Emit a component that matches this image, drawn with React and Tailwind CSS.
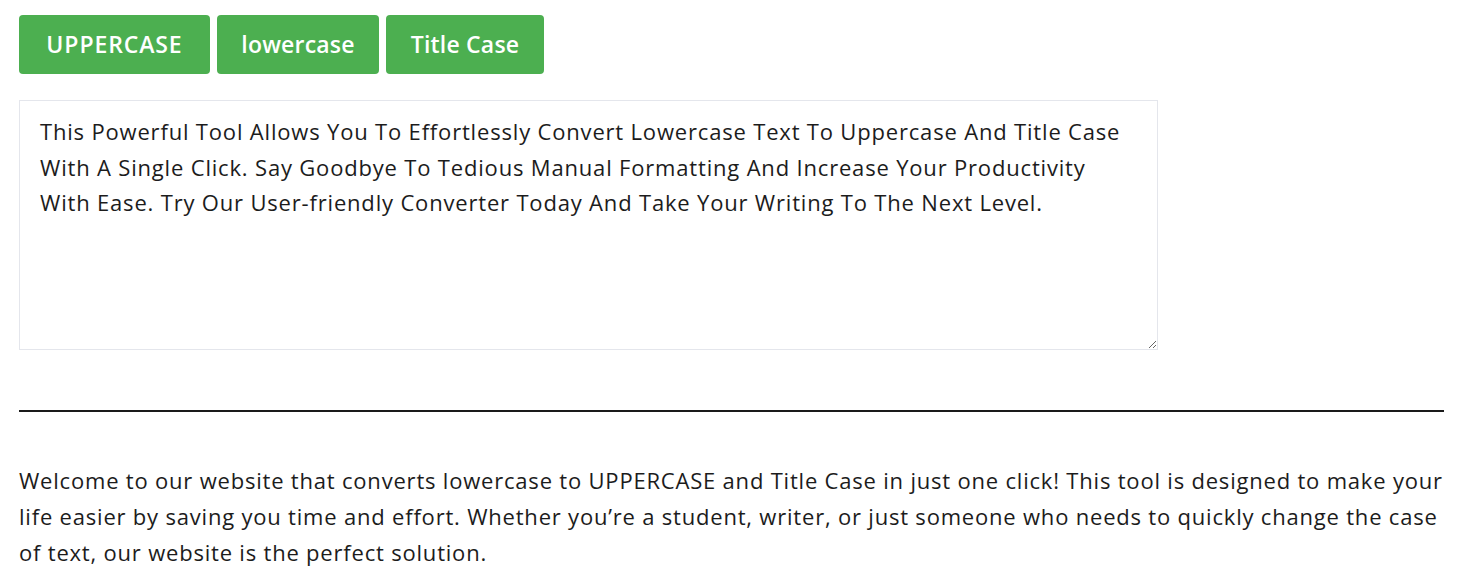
import React from "react";

export default function App() {
  const text =
    "This Powerful Tool Allows You To Effortlessly Convert Lowercase Text To Uppercase And Title Case With A Single Click. Say Goodbye To Tedious Manual Formatting And Increase Your Productivity With Ease. Try Our User-friendly Converter Today And Take Your Writing To The Next Level.";
  return (
    <div className="bg-white min-h-[587px] px-[19px] pt-[15px] text-[#1c1c1c] font-['Open_Sans',sans-serif]">
      <div className="flex gap-[7px]">
        <button className="h-[59px] w-[191px] rounded-[4px] bg-[#4caf50] text-white text-[23px] font-semibold tracking-[0.9px]">UPPERCASE</button>
        <button className="h-[59px] w-[162px] rounded-[4px] bg-[#4caf50] text-white text-[23px] font-semibold tracking-[0.2px]">lowercase</button>
        <button className="h-[59px] w-[158px] rounded-[4px] bg-[#4caf50] text-white text-[23px] font-semibold tracking-[0.2px]">Title Case</button>
      </div>
      <textarea
        className="block mt-[26px] w-[1139px] h-[250px] border border-[#e4e6ec] px-[20px] py-[13px] text-[22px] leading-[35.5px] tracking-[0.82px] text-[#1c1c1c] outline-none font-['Open_Sans',sans-serif]"
        defaultValue={text}
      />
      <hr className="mt-[60px] border-0 border-t-2 border-[#1a1a1a] w-[1425px]" />
      <p className="mt-[50px] w-[1432px] text-[22px] leading-[36px] tracking-[0.8px] text-[#1c1c1c]">
        Welcome to our website that converts lowercase to UPPERCASE and Title Case in just one click! This tool is designed to make your life easier by saving you time and effort. Whether you’re a student, writer, or just someone who needs to quickly change the case of text, our website is the perfect solution.
      </p>
    </div>
  );
}
